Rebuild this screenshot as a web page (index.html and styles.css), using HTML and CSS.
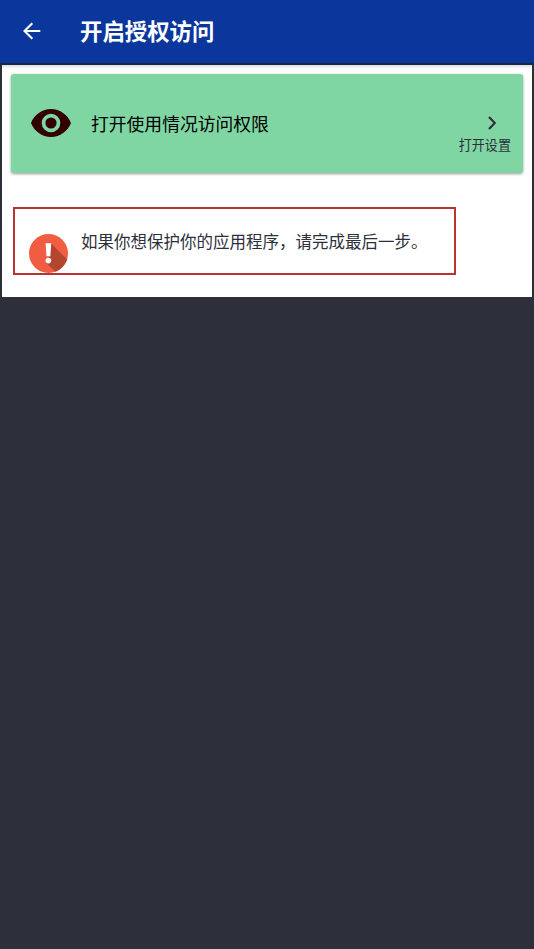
FILE: index.html
```html
<!DOCTYPE html>
<html lang="zh-CN">
<head>
<meta charset="utf-8">
<title>开启授权访问</title>
<link rel="stylesheet" href="styles.css">
</head>
<body>
<header class="app-bar">
  <svg class="back" viewBox="0 0 18 18" aria-hidden="true"><path d="M17.3 9H1.8M9.3 1.2L1.5 9l7.8 7.8"/></svg>
  <h1 class="title">开启授权访问</h1>
</header>
<main class="panel">
  <section class="card">
    <svg class="eye" viewBox="0 0 40 28" aria-hidden="true">
      <path fill="#330000" fill-rule="evenodd" d="M20 0C11 0 3.3 5.800 0 14c3.300 8.200 11 14 20 14s16.700-5.800 20-14C36.700 5.800 29 0 20 0zM20 4.700a9.300 9.300 0 1 1 0 18.600a9.300 9.300 0 1 1 0-18.600z"/>
      <circle cx="20" cy="14" r="5.600" fill="#330000"/>
    </svg>
    <span class="label">打开使用情况访问权限</span>
    <div class="action">
      <svg class="chevron" viewBox="0 0 8 14" aria-hidden="true"><path d="M1 1.100L6.800 7L1 12.900"/></svg>
      <span>打开设置</span>
    </div>
  </section>
  <section class="notice">
    <svg class="alert" viewBox="0 0 40 40" aria-hidden="true">
      <defs><clipPath id="disc"><circle cx="20" cy="20" r="20"/></clipPath></defs>
      <circle cx="20" cy="20" r="20" fill="#f15d43"/>
      <path clip-path="url(#disc)" fill="#b4452f" d="M22.500 9.500L42 29v13H30.500L17.500 29.500l4-7z"/>
      <path fill="#fff" d="M17 9.500h5.800l-.9 13.200h-4z"/>
      <circle cx="19.900" cy="27.300" r="2.900" fill="#fff"/>
    </svg>
    <p class="message">如果你想保护你的应用程序，请完成最后一步。</p>
  </section>
</main>
</body>
</html>
```
FILE: styles.css
```css
* { box-sizing: border-box; }
body {
  margin: 0;
  min-height: 949px;
  background: #2d2f3b;
  color: #2d2f3b;
  font-family: "Noto Sans CJK SC", sans-serif;
}
.app-bar {
  display: flex;
  align-items: center;
  height: 65px;
  padding: 0 0 2px 23px;
  background: #0b369c;
  border-bottom: 2px solid #192747;
}
.back {
  width: 18px;
  height: 18px;
  margin-top: 1px;
  fill: none;
  stroke: #fff;
  stroke-width: 2.1;
}
.title {
  margin: -1px 0 0 39px;
  color: #fff;
  font-size: 22.4px;
  font-weight: 700;
  line-height: 32px;
}
.panel {
  height: 232px;
  margin: 0 2px;
  padding: 8.5px 9px 0;
  background: linear-gradient(#dedede, #fff 4px);
}
.card {
  display: flex;
  align-items: center;
  height: 99.5px;
  padding-left: 20px;
  border-radius: 3px;
  background: #80d6a3;
  box-shadow: 0 1px 3px rgba(0, 0, 0, 0.4);
}
.eye {
  width: 40px;
  height: 28px;
}
.label {
  margin: -1px 0 0 20px;
  color: #000;
  font-size: 17.8px;
  line-height: 26px;
}
.action {
  display: flex;
  flex-direction: column;
  align-items: flex-end;
  align-self: flex-start;
  margin: 42.5px 12px 0 auto;
  font-size: 13.1px;
  line-height: 20px;
}
.chevron {
  width: 8px;
  height: 14px;
  margin: 0 15px 5px 0;
  fill: none;
  stroke: #2d2f3b;
  stroke-width: 2.2;
}
.notice {
  display: flex;
  width: 443px;
  height: 68px;
  margin: 34px 0 0 2px;
  padding-left: 14px;
  border: 2px solid #b93333;
}
.alert {
  flex: none;
  width: 39px;
  height: 39px;
  margin-top: 25px;
}
.message {
  margin: 20px 0 0 13px;
  font-size: 16.5px;
  line-height: 24px;
  white-space: nowrap;
}
```
